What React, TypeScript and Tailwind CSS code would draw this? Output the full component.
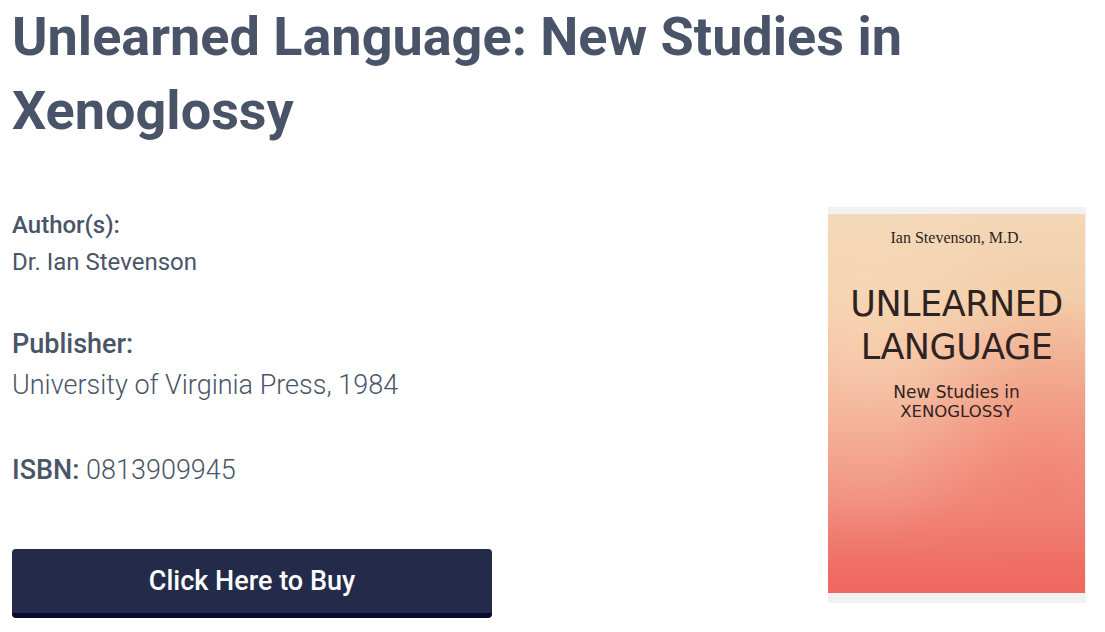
import React from 'react';

const BookCover: React.FC = () => (
  <div className="w-[258px] bg-[#f1f1f1] pt-[7px] pb-[10px] pr-px">
    <div className="relative h-[379px] w-[257px] overflow-hidden bg-[linear-gradient(180deg,#f3d7b6_0%,#f3cda9_22%,#f2b597_42%,#f2a08a_58%,#f18b7c_76%,#ef7066_92%,#ee6660_100%)]">
      <div className="absolute inset-0 bg-[radial-gradient(ellipse_at_15%_35%,rgba(255,236,205,0.35),transparent_55%)]" />
      <div className="absolute inset-0 bg-[radial-gradient(ellipse_at_85%_70%,rgba(240,110,95,0.35),transparent_50%)]" />
      <div className="relative flex flex-col items-center text-[#2e2321]">
        <p className="mt-[14px] font-['Liberation_Serif',serif] text-[16px] leading-[20px]">Ian Stevenson, M.D.</p>
        <p className="mt-[35px] font-['DejaVu_Sans',sans-serif] text-[35px] leading-[43px] tracking-[-0.5px]">UNLEARNED</p>
        <p className="font-['DejaVu_Sans',sans-serif] text-[35px] leading-[43px] tracking-[-0.5px]">LANGUAGE</p>
        <p className="mt-[13px] font-['DejaVu_Sans',sans-serif] text-[17px] leading-[20px]">New Studies in</p>
        <p className="font-['DejaVu_Sans',sans-serif] text-[16.5px] leading-[20px]">XENOGLOSSY</p>
      </div>
    </div>
  </div>
);

export default function App() {
  return (
    <div className="w-[1105px] h-[632px] bg-white px-3 font-['Roboto',sans-serif] text-[#4a5568] overflow-hidden">
      <h1 className="max-w-[960px] text-[54px] font-bold leading-[74px] text-[#4a5468]">
        Unlearned Language: New Studies in Xenoglossy
      </h1>
      <div className="mt-[59px] flex items-start justify-between pr-[7px]">
        <div className="w-[480px]">
          <p className="text-[24px] font-medium leading-[37px]">Author(s):</p>
          <p className="text-[24px] leading-[37px]">Dr. Ian Stevenson</p>
          <p className="mt-[43px] text-[27px] font-medium leading-[40px]">Publisher:</p>
          <p className="mt-px text-[27px] font-light leading-[40px]">University of Virginia Press, 1984</p>
          <p className="mt-[45px] text-[27px] leading-[40px]">
            <span className="font-medium">ISBN:</span> <span className="font-light">0813909945</span>
          </p>
          <button className="mt-[59px] h-[69px] w-[480px] rounded-[4px] border-b-[5px] border-[#070b2c] bg-[#232a4a] text-[27px] font-medium text-white">
            Click Here to Buy
          </button>
        </div>
        <BookCover />
      </div>
    </div>
  );
}
